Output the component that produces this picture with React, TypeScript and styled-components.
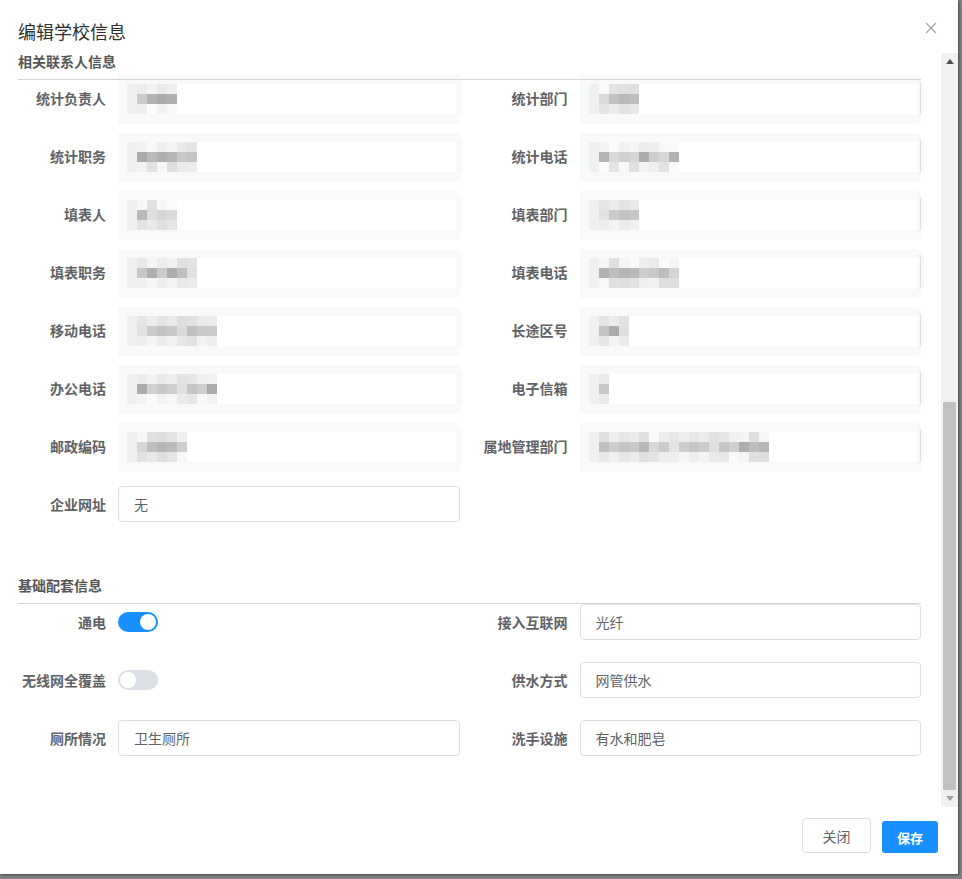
import React from "react";
import styled, { createGlobalStyle } from "styled-components";

const GlobalStyle = createGlobalStyle`
  html, body {
    margin: 0;
    padding: 0;
    background: #7f7f7f;
  }
  body {
    font-family: "Noto Sans CJK SC", "Noto Sans", sans-serif;
  }
  * {
    box-sizing: border-box;
  }
`;

interface BlurValue {
  cells: number;
  seed: number;
}

interface FieldItem {
  label: string;
  value?: string;
  blur?: BlurValue;
}

const contactFields: FieldItem[][] = [
  [
    { label: "统计负责人", blur: { cells: 5, seed: 3 } },
    { label: "统计部门", blur: { cells: 5, seed: 7 } },
  ],
  [
    { label: "统计职务", blur: { cells: 7, seed: 11 } },
    { label: "统计电话", blur: { cells: 9, seed: 5 } },
  ],
  [
    { label: "填表人", blur: { cells: 5, seed: 13 } },
    { label: "填表部门", blur: { cells: 5, seed: 2 } },
  ],
  [
    { label: "填表职务", blur: { cells: 7, seed: 17 } },
    { label: "填表电话", blur: { cells: 9, seed: 19 } },
  ],
  [
    { label: "移动电话", blur: { cells: 9, seed: 23 } },
    { label: "长途区号", blur: { cells: 4, seed: 29 } },
  ],
  [
    { label: "办公电话", blur: { cells: 9, seed: 31 } },
    { label: "电子信箱", blur: { cells: 2, seed: 37 } },
  ],
  [
    { label: "邮政编码", blur: { cells: 6, seed: 41 } },
    { label: "属地管理部门", blur: { cells: 18, seed: 43 } },
  ],
];

// 像素化的值，用来代替被打码的内容
function shadeOf(seed: number, row: number, col: number) {
  const n = (seed * 37 + col * 53 + row * 19 + col * col * 7) % 97;
  if (row === 1) return 170 + (n % 60);
  return 222 + (n % 30);
}

function PixelValue({ cells, seed }: BlurValue) {
  const rows = [0, 1, 2];
  return (
    <PixelGrid $cols={cells}>
      {rows.map((r) =>
        Array.from({ length: cells }).map((_, c) => (
          <Cell key={`${r}-${c}`} $shade={c === 0 ? 240 : shadeOf(seed, r, c)} />
        ))
      )}
    </PixelGrid>
  );
}

function Field({ item, edge }: { item?: FieldItem; edge?: boolean }) {
  if (!item) return <div />;
  return (
    <Row>
      <Label>{item.label}</Label>
      {item.blur ? (
        <BlurField $edge={edge}>
          <BlurInner>
            <PixelValue {...item.blur} />
          </BlurInner>
        </BlurField>
      ) : (
        <Input>{item.value}</Input>
      )}
    </Row>
  );
}

function SwitchField({ label, on }: { label: string; on?: boolean }) {
  return (
    <Row>
      <Label>{label}</Label>
      <Track $on={on}>
        <Knob />
      </Track>
    </Row>
  );
}

export default function App() {
  return (
    <Page>
      <GlobalStyle />
      <Modal>
        <Header>
          <Title>编辑学校信息</Title>
          <CloseIcon width="12" height="12" viewBox="0 0 12 12">
            <path d="M1 1 L11 11 M11 1 L1 11" stroke="#a0a3a8" strokeWidth="1.2" fill="none" />
          </CloseIcon>
        </Header>

        <Body>
          <Content>
            <Section>
              <SectionHead>相关联系人信息</SectionHead>
              <FormGrid>
                {contactFields.map(([l, r]) => (
                  <React.Fragment key={l.label}>
                    <Field item={l} />
                    <Field item={r} edge />
                  </React.Fragment>
                ))}
                <Field item={{ label: "企业网址", value: "无" }} />
                <div />
              </FormGrid>
            </Section>

            <Section $spaced>
              <SectionHead>基础配套信息</SectionHead>
              <FormGrid>
                <SwitchField label="通电" on />
                <Field item={{ label: "接入互联网", value: "光纤" }} />
                <SwitchField label="无线网全覆盖" />
                <Field item={{ label: "供水方式", value: "网管供水" }} />
                <Field item={{ label: "厕所情况", value: "卫生厕所" }} />
                <Field item={{ label: "洗手设施", value: "有水和肥皂" }} />
              </FormGrid>
            </Section>
          </Content>

          <Scrollbar>
            <Arrow>
              <svg width="8" height="5" viewBox="0 0 8 5">
                <path d="M0 5 L4 0 L8 5 Z" fill="#505050" />
              </svg>
            </Arrow>
            <ScrollTrack>
              <Thumb />
            </ScrollTrack>
            <Arrow>
              <svg width="8" height="5" viewBox="0 0 8 5">
                <path d="M0 0 L8 0 L4 5 Z" fill="#a3a3a3" />
              </svg>
            </Arrow>
          </Scrollbar>
        </Body>

        <Footer>
          <Button>关闭</Button>
          <Button $primary>保存</Button>
        </Footer>
      </Modal>
    </Page>
  );
}

const Page = styled.div`
  width: 962px;
  height: 879px;
  background: #7f7f7f;
  overflow: hidden;
`;

const Modal = styled.div`
  width: 958px;
  height: 874px;
  background: #fff;
  display: flex;
  flex-direction: column;
  box-shadow: 1px 1px 2px rgba(0, 0, 0, 0.45);
`;

const Header = styled.div`
  height: 51px;
  flex-shrink: 0;
  display: flex;
  align-items: flex-start;
  justify-content: space-between;
  padding: 19px 21px 0 18px;
`;

const Title = styled.div`
  font-size: 18px;
  line-height: 24px;
  color: #303133;
`;

const CloseIcon = styled.svg`
  margin-top: 3px;
`;

const Body = styled.div`
  height: 756px;
  flex-shrink: 0;
  display: flex;
  overflow: hidden;
`;

const Content = styled.div`
  flex: 1;
  padding: 0 20px 0 18px;
  overflow: hidden;
`;

const Section = styled.div<{ $spaced?: boolean }>`
  margin-top: ${({ $spaced }) => ($spaced ? "53px" : "0")};
`;

const SectionHead = styled.div`
  position: relative;
  z-index: 1;
  height: 29px;
  border-bottom: 1px solid #d4d4d4;
  font-size: 14px;
  line-height: 20px;
  font-weight: 700;
  color: #555;
`;

const FormGrid = styled.div`
  display: grid;
  grid-template-columns: 1fr 1fr;
  column-gap: 20px;
  row-gap: 22px;
`;

const Row = styled.div`
  display: flex;
  align-items: center;
  height: 36px;
`;

const Label = styled.div`
  width: 100px;
  flex-shrink: 0;
  padding-right: 12px;
  text-align: right;
  font-size: 14px;
  font-weight: 700;
  color: #606266;
  white-space: nowrap;
`;

const Input = styled.div`
  flex: 1;
  height: 36px;
  border: 1px solid #dcdfe6;
  border-radius: 4px;
  padding: 0 15px;
  display: flex;
  align-items: center;
  font-size: 14px;
  color: #606266;
`;

const BlurField = styled.div<{ $edge?: boolean }>`
  flex: 1;
  height: 36px;
  background: #f8f9fa;
  padding: 4px 3px 2px 9px;
  box-shadow: 0 -5px 0 #f8f9fa, 0 8px 0 #f8f9fa, 3px 0 0 #f8f9fa;
  border-right: 1px solid ${({ $edge }) => ($edge ? "#dcdfe6" : "transparent")};
  border-radius: 0 4px 4px 0;
`;

const BlurInner = styled.div`
  height: 30px;
  background: #fff;
  display: flex;
`;

const PixelGrid = styled.div<{ $cols: number }>`
  display: grid;
  grid-template-columns: repeat(${({ $cols }) => $cols}, 10px);
  grid-auto-rows: 10px;
`;

const Cell = styled.div<{ $shade: number }>`
  background: ${({ $shade }) => `rgb(${$shade}, ${$shade}, ${$shade + 2})`};
`;

const Track = styled.div<{ $on?: boolean }>`
  width: 40px;
  height: 20px;
  border-radius: 10px;
  background: ${({ $on }) => ($on ? "#1890ff" : "#dcdfe6")};
  display: flex;
  align-items: center;
  justify-content: ${({ $on }) => ($on ? "flex-end" : "flex-start")};
  padding: 0 2px;
`;

const Knob = styled.div`
  width: 16px;
  height: 16px;
  border-radius: 50%;
  background: #fff;
`;

const Scrollbar = styled.div`
  width: 17px;
  flex-shrink: 0;
  margin-top: 2px;
  background: #f1f1f1;
  display: flex;
  flex-direction: column;
`;

const Arrow = styled.div`
  height: 17px;
  flex-shrink: 0;
  display: flex;
  align-items: center;
  justify-content: center;
`;

const ScrollTrack = styled.div`
  flex: 1;
  display: flex;
  flex-direction: column;
  justify-content: flex-end;
  padding: 0 2px;
`;

const Thumb = styled.div`
  height: 388px;
  background: #c1c1c1;
`;

const Footer = styled.div`
  flex: 1;
  display: flex;
  justify-content: flex-end;
  align-items: flex-end;
  gap: 11px;
  padding: 0 20px 21px 0;
`;

const Button = styled.button<{ $primary?: boolean }>`
  font-family: inherit;
  cursor: pointer;
  ${({ $primary }) =>
    $primary
      ? `
      width: 56px;
      height: 32px;
      border: none;
      border-radius: 3px;
      background: #1890ff;
      color: #fff;
      font-size: 13px;
      font-weight: 700;
    `
      : `
      width: 69px;
      height: 35px;
      border: 1px solid #dcdfe6;
      border-radius: 4px;
      background: #fff;
      color: #606266;
      font-size: 14px;
    `}
`;
